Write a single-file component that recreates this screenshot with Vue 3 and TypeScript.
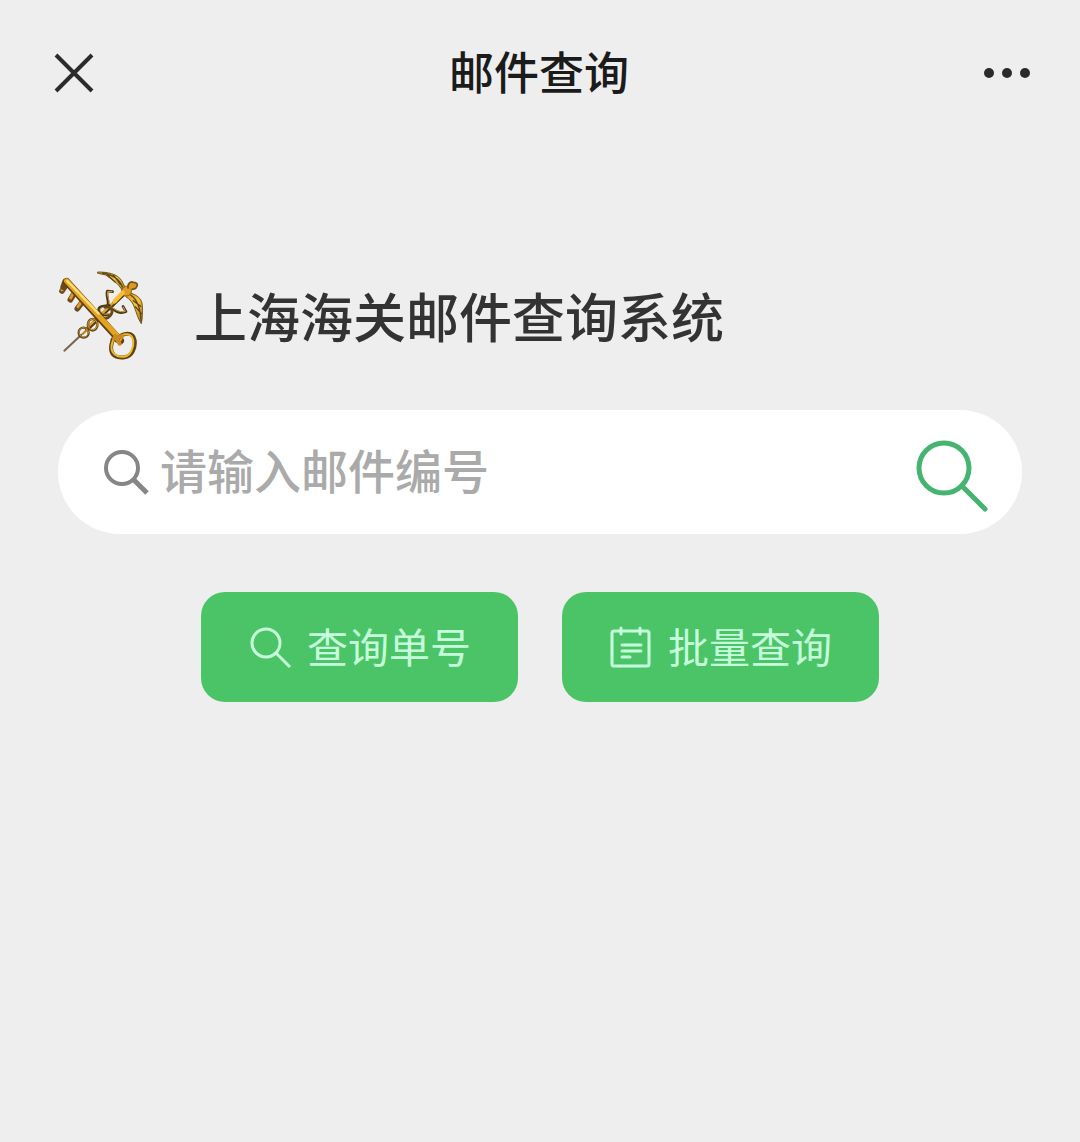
<script setup lang="ts">
import { ref } from 'vue'

const trackingNumber = ref('')
</script>

<template>
  <div class="page">
    <header class="topbar">
      <button class="icon-button" type="button" aria-label="关闭">
        <svg width="40" height="40" viewBox="0 0 40 40" fill="none" stroke="#2b2b2b" stroke-width="4">
          <path d="M2 2 38 38M38 2 2 38" />
        </svg>
      </button>
      <h1 class="topbar-title">邮件查询</h1>
      <button class="icon-button" type="button" aria-label="更多">
        <svg width="48" height="40" viewBox="0 0 48 40" fill="#2b2b2b">
          <circle cx="5" cy="20" r="5" />
          <circle cx="23" cy="20" r="5" />
          <circle cx="41" cy="20" r="5" />
        </svg>
      </button>
    </header>

    <main class="content">
      <div class="brand">
        <svg class="emblem" width="86" height="90" viewBox="54 33 258 270" fill="none" stroke-linecap="round" stroke-linejoin="round" aria-hidden="true">
          <defs>
            <linearGradient id="gold" x1="0" y1="0" x2="1" y2="1">
              <stop offset="0" stop-color="#d99a20" />
              <stop offset="0.5" stop-color="#f3c53c" />
              <stop offset="1" stop-color="#a8710f" />
            </linearGradient>
          </defs>
          <!-- caduceus staff -->
          <path d="M73 275 124 227" stroke="#77664d" stroke-width="6" />
          <path d="M141 211 270 87" stroke="#4a3511" stroke-width="12" />
          <path d="M141 207 268 85" stroke="#dda329" stroke-width="7" />
          <!-- wings -->
          <path d="M174 39C202 39 232 44 245 65L258 90 248 97C235 70 210 58 197 48L174 43Z" fill="url(#gold)" stroke="#75551b" stroke-width="3" />
          <path d="M187 42C215 46 238 59 247 84M203 49 226 70M221 49 241 76" stroke="#5b461d" stroke-width="4" />
          <path d="M263 100C286 105 306 116 307 140C308 161 307 180 304 194C293 178 290 162 283 144C279 132 269 120 258 113Z" fill="url(#gold)" stroke="#75551b" stroke-width="3" />
          <path d="M272 108C293 122 301 145 303 185M280 125 302 142M286 143 304 164" stroke="#5b461d" stroke-width="4" />
          <path d="M245 96C248 82 262 76 272 88C280 103 266 115 252 110Z" fill="#dc9c27" stroke="#8f6016" stroke-width="3" />
          <path d="M264 87C262 72 273 66 280 70C293 70 296 80 287 88L277 91" fill="#d99922" stroke="#79501a" stroke-width="5" />
          <path d="M248 101 224 127" stroke="#f6be35" stroke-width="13" />
          <!-- snakes -->
          <path d="M218 98 202 96C197 108 207 126 204 137C199 145 177 137 176 151C177 164 190 171 205 167" stroke="#49371a" stroke-width="8" />
          <path d="M216 97 203 98C200 110 211 127 207 138C200 147 180 142 180 153C183 164 197 169 208 164" stroke="#d6a035" stroke-width="3" />
          <path d="M249 142 258 158C240 167 219 154 207 139" stroke="#49371a" stroke-width="8" />
          <path d="M250 144 256 157C240 162 222 151 211 142" stroke="#d6a035" stroke-width="3" />
          <path d="M195 145C215 140 222 157 211 170C200 184 184 180 181 164" stroke="#654817" stroke-width="8" />
          <ellipse cx="158" cy="197" rx="14" ry="17" stroke="#6b4c18" stroke-width="8" />
          <ellipse cx="158" cy="196" rx="14" ry="16" stroke="#d5a13a" stroke-width="3" />
          <circle cx="131" cy="221" r="15" stroke="#5d441d" stroke-width="7" />
          <circle cx="131" cy="220" r="14" stroke="#c1933a" stroke-width="3" />
          <path d="M128 225 140 213" stroke="#bd851d" stroke-width="6" />
          <!-- key -->
          <path d="M78 78 66 96M102 104 91 122M126 130 112 149" stroke="#6d471d" stroke-width="17" />
          <path d="M76 76 66 93M101 100 92 117M125 127 114 143" stroke="#d89a2c" stroke-width="9" />
          <path d="M70 84 76 68 84 76" stroke="#6d471d" stroke-width="18" />
          <path d="M80 68 241 245" stroke="#5e4115" stroke-width="22" />
          <path d="M80 66 239 239" stroke="#e4a321" stroke-width="16" />
          <path d="M82 66 176 164" stroke="#ffe078" stroke-width="7" />
          <path d="M229 244C249 217 280 218 284 244C287 268 275 292 254 295C227 298 209 287 214 258L218 241" stroke="#624313" stroke-width="12" />
          <path d="M229 242C249 219 276 221 280 245C282 267 271 289 253 293C232 296 211 284 215 258L219 244" stroke="#eeba32" stroke-width="6" />
          <path d="M225 231 239 254M247 231 222 239" stroke="#cc891e" stroke-width="12" />
        </svg>
        <h2 class="brand-title">上海海关邮件查询系统</h2>
      </div>

      <form id="query-form" class="search" role="search" @submit.prevent>
        <label class="search-label" for="tracking" aria-label="邮件编号">
          <svg width="48" height="48" viewBox="0 0 48 48" fill="none" stroke="#868686">
            <circle cx="20" cy="20" r="16" stroke-width="4" />
            <path d="M32 32 45 45" stroke-width="5" />
          </svg>
        </label>
        <input id="tracking" v-model="trackingNumber" class="search-input" type="text" placeholder="请输入邮件编号" />
        <button class="icon-button search-submit" type="submit" aria-label="搜索">
          <svg width="72" height="72" viewBox="0 0 72 72" fill="none" stroke="#46b36f" stroke-width="5" stroke-linecap="round">
            <circle cx="28" cy="28" r="25" />
            <path d="M46 46 69 69" />
          </svg>
        </button>
      </form>

      <div class="actions">
        <button class="action" type="submit" form="query-form">
          <svg width="42" height="42" viewBox="0 0 42 42" fill="none" stroke="#c5ffdb" stroke-width="3">
            <circle cx="17" cy="17" r="14" />
            <path d="M27 27 41 41" />
          </svg>
          <span class="action-text">查询单号</span>
        </button>
        <button class="action" type="button">
          <svg width="42" height="42" viewBox="0 0 42 42" fill="none" stroke="#c5ffdb" stroke-width="3" stroke-linecap="round">
            <rect x="2" y="5" width="37" height="35" rx="2" />
            <path d="M11 2V8M30 2V8M12 19H31M12 25H31M12 31H20" />
          </svg>
          <span class="action-text">批量查询</span>
        </button>
      </div>
    </main>
  </div>
</template>

<style>
body {
  margin: 0;
  background: #eee;
}
</style>

<style scoped>
.page {
  min-height: 100vh;
  background: #eee;
  font-family: "Noto Sans CJK SC", sans-serif;
}

.topbar {
  display: flex;
  align-items: center;
  justify-content: space-between;
  height: 146px;
  padding: 0 48px 0 54px;
}

.icon-button {
  display: flex;
  flex: none;
  padding: 0;
  border: 0;
  background: none;
}

.topbar-title {
  margin: 0;
  padding-bottom: 4px;
  color: #1b1b1b;
  font-size: 45px;
  font-weight: 500;
  line-height: 64px;
}

.content {
  padding: 124px 58px 0;
}

.brand {
  display: flex;
  align-items: center;
  gap: 50px;
}

.emblem {
  flex: none;
}

.brand-title {
  margin: 0;
  color: #333;
  font-size: 53px;
  font-weight: 500;
  line-height: 72px;
}

.search {
  display: flex;
  align-items: center;
  height: 124px;
  margin-top: 50px;
  padding: 0 34px 0 44px;
  box-sizing: border-box;
  border-radius: 62px;
  background: #fff;
}

.search-label {
  display: flex;
  flex: none;
}

.search-input {
  flex: 1;
  min-width: 0;
  height: 72px;
  padding: 0 10px 8px;
  border: 0;
  outline: 0;
  background: transparent;
  color: #333;
  font-family: inherit;
  font-size: 47px;
  font-weight: 500;
}

.search-input::placeholder {
  color: #aaa;
  opacity: 1;
}

.search-submit {
  padding-top: 8px;
}

.actions {
  display: flex;
  justify-content: center;
  gap: 44px;
  margin-top: 58px;
}

.action {
  display: flex;
  align-items: center;
  justify-content: center;
  gap: 16px;
  height: 110px;
  padding: 0 47px 0 48px;
  border: 0;
  border-radius: 24px;
  background: #4bc467;
  color: #c5ffdb;
  font-family: inherit;
  font-size: 41px;
  line-height: 60px;
  white-space: nowrap;
}

.action-text {
  padding-bottom: 4px;
}
</style>
